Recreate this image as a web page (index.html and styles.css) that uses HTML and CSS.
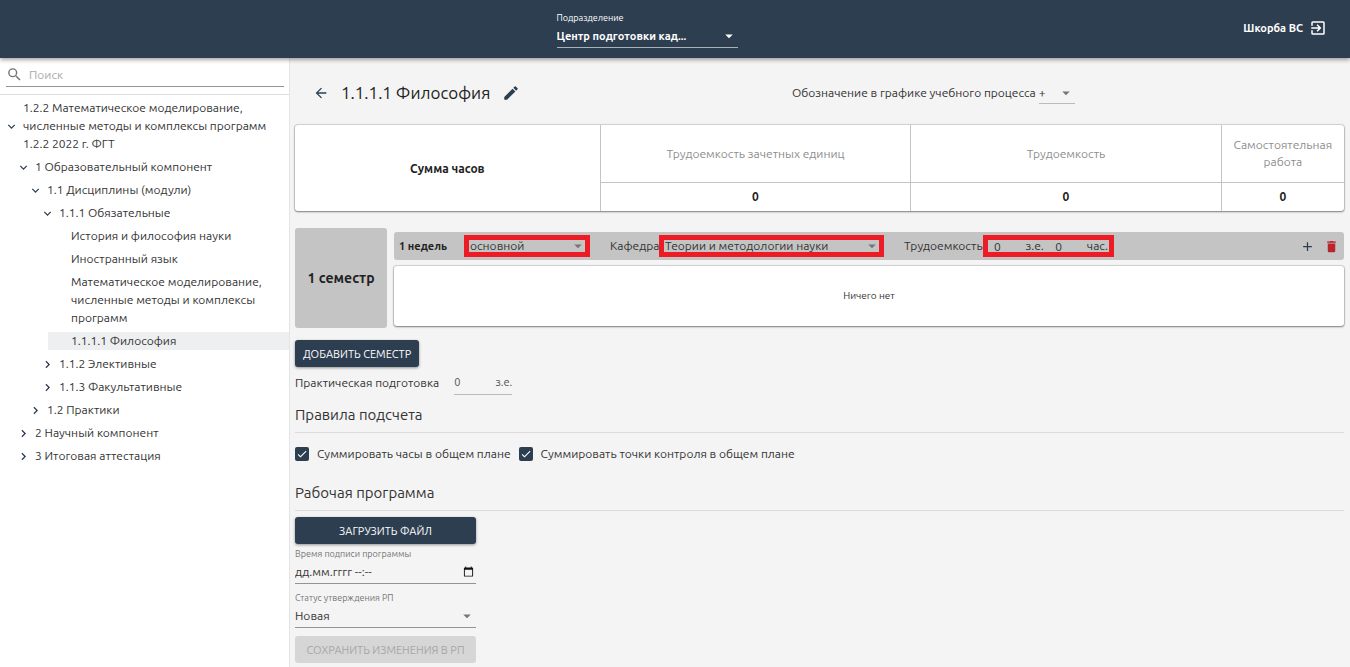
FILE: index.html
```html
<!DOCTYPE html>
<html lang="ru">
<head>
<meta charset="utf-8">
<meta name="viewport" content="width=device-width, initial-scale=1">
<title>1.1.1.1 Философия</title>
<link rel="stylesheet" href="styles.css">
</head>
<body>
<svg class="sprite" aria-hidden="true">
  <symbol id="down" viewBox="0 0 24 24"><path d="M7 10l5 5 5-5z"/></symbol>
  <symbol id="chevron" viewBox="0 0 24 24"><path d="M6 7.500 12 13.500l6-6 2 2-8 8-8-8z"/></symbol>
  <symbol id="check" viewBox="0 0 24 24"><path d="M9 16.2 4.8 12l-1.4 1.4L9 19 21 7l-1.4-1.4z"/></symbol>
</svg>

<header class="topbar">
  <div class="division">
    <label class="division-label" for="division">Подразделение</label>
    <span class="select">
      <select id="division"><option>Центр подготовки кад...</option></select>
      <svg class="caret"><use href="#down"/></svg>
    </span>
  </div>
  <button class="user" type="button">Шкорба ВС
    <svg viewBox="0 0 24 24"><path d="M10.09 15.59 11.5 17l5-5-5-5-1.41 1.41L12.67 11H3v2h9.67zM19 3H5a2 2 0 0 0-2 2v4h2V5h14v14H5v-4H3v4a2 2 0 0 0 2 2h14a2 2 0 0 0 2-2V5a2 2 0 0 0-2-2z"/></svg>
  </button>
</header>

<div class="layout">
  <nav class="sidebar" aria-label="Учебный план">
    <div class="search-wrap">
      <div class="search">
        <svg viewBox="0 0 24 24"><path d="M15.5 14h-.79l-.28-.27A6.47 6.47 0 0 0 16 9.5 6.5 6.5 0 1 0 9.5 16c1.61 0 3.09-.59 4.23-1.57l.27.28v.79l5 4.99L20.49 19zm-6 0a4.5 4.5 0 1 1 0-9 4.5 4.5 0 0 1 0 9z"/></svg>
        <input type="search" placeholder="Поиск" aria-label="Поиск">
      </div>
    </div>
    <ul class="tree">
      <li>
        <a class="node open" href="#"><svg><use href="#chevron"/></svg><span>1.2.2 Математическое моделирование, численные методы и комплексы программ 1.2.2 2022 г. ФГТ</span></a>
        <ul>
          <li>
            <a class="node open" href="#"><svg><use href="#chevron"/></svg><span>1 Образовательный компонент</span></a>
            <ul>
              <li>
                <a class="node open" href="#"><svg><use href="#chevron"/></svg><span>1.1 Дисциплины (модули)</span></a>
                <ul>
                  <li>
                    <a class="node open" href="#"><svg><use href="#chevron"/></svg><span>1.1.1 Обязательные</span></a>
                    <ul>
                      <li><a class="node leaf" href="#">История и философия науки</a></li>
                      <li><a class="node leaf" href="#">Иностранный язык</a></li>
                      <li><a class="node leaf" href="#">Математическое моделирование, численные методы и комплексы программ</a></li>
                      <li><a class="node leaf current" href="#" aria-current="page">1.1.1.1 Философия</a></li>
                    </ul>
                  </li>
                  <li><a class="node" href="#"><svg><use href="#chevron"/></svg><span>1.1.2 Элективные</span></a></li>
                  <li><a class="node" href="#"><svg><use href="#chevron"/></svg><span>1.1.3 Факультативные</span></a></li>
                </ul>
              </li>
              <li><a class="node" href="#"><svg><use href="#chevron"/></svg><span>1.2 Практики</span></a></li>
            </ul>
          </li>
          <li><a class="node" href="#"><svg><use href="#chevron"/></svg><span>2 Научный компонент</span></a></li>
          <li><a class="node" href="#"><svg><use href="#chevron"/></svg><span>3 Итоговая аттестация</span></a></li>
        </ul>
      </li>
    </ul>
  </nav>

  <main class="content">
    <div class="title-row">
      <div class="title">
        <button class="icon-btn" type="button" aria-label="Назад"><svg viewBox="0 0 24 24"><path d="M20 11H7.83l5.59-5.59L12 4l-8 8 8 8 1.41-1.41L7.83 13H20z"/></svg></button>
        <h1>1.1.1.1 Философия</h1>
        <button class="icon-btn edit" type="button" aria-label="Редактировать"><svg viewBox="0 0 24 24"><path d="M3 17.25V21h3.75L17.81 9.94l-3.75-3.75zM20.71 7.04a1 1 0 0 0 0-1.41l-2.34-2.34a1 1 0 0 0-1.41 0l-1.83 1.83 3.75 3.75z"/></svg></button>
      </div>
      <div class="schedule">
        <label for="mark">Обозначение в графике учебного процесса</label>
        <span class="select">
          <select id="mark"><option>+</option></select>
          <svg class="caret"><use href="#down"/></svg>
        </span>
      </div>
    </div>

    <div class="card totals-card">
      <table class="totals">
        <colgroup><col class="col-sum"><col class="col-wide"><col class="col-wide"><col></colgroup>
        <thead>
          <tr><th class="sum" rowspan="2" scope="row">Сумма часов</th><th scope="col">Трудоемкость зачетных единиц</th><th scope="col">Трудоемкость</th><th scope="col">Самостоятельная работа</th></tr>
          <tr><td>0</td><td>0</td><td>0</td></tr>
        </thead>
      </table>
    </div>

    <section class="semester">
      <h2 class="semester-name">1 семестр</h2>
      <div class="semester-body">
        <div class="period">
          <strong class="weeks">1 недель</strong>
          <span class="select marked kind">
            <select aria-label="Тип"><option>основной</option></select>
            <svg class="caret"><use href="#down"/></svg>
          </span>
          <div class="field">
            <label class="chair-label" for="chair">Кафедра</label>
            <span class="select marked chair">
              <select id="chair"><option>Теории и методологии науки</option></select>
              <svg class="caret"><use href="#down"/></svg>
            </span>
          </div>
          <div class="field">
            <label class="load-label" for="ze">Трудоемкость</label>
            <div class="marked load">
              <input id="ze" type="text" value="0"><span>з.е.</span>
              <input type="text" value="0" aria-label="Часы"><span>час.</span>
            </div>
          </div>
          <div class="actions">
            <button class="icon-btn" type="button" aria-label="Добавить"><svg viewBox="0 0 24 24"><path d="M19 13h-6v6h-2v-6H5v-2h6V5h2v6h6z"/></svg></button>
            <button class="icon-btn danger" type="button" aria-label="Удалить"><svg viewBox="0 0 24 24"><path d="M6 19a2 2 0 0 0 2 2h8a2 2 0 0 0 2-2V7H6zM19 4h-3.500l-1-1h-5l-1 1H5v2h14z"/></svg></button>
          </div>
        </div>
        <div class="card empty">Ничего нет</div>
      </div>
    </section>

    <button class="btn add" type="button">ДОБАВИТЬ СЕМЕСТР</button>

    <div class="practice">
      <label for="practice">Практическая подготовка</label>
      <div class="practice-field"><input id="practice" type="text" value="0"><span>з.е.</span></div>
    </div>

    <h2 class="section-title rules">Правила подсчета</h2>
    <div class="checks">
      <label class="check"><span class="box"><input type="checkbox" checked><svg><use href="#check"/></svg></span>Суммировать часы в общем плане</label>
      <label class="check"><span class="box"><input type="checkbox" checked><svg><use href="#check"/></svg></span>Суммировать точки контроля в общем плане</label>
    </div>

    <h2 class="section-title">Рабочая программа</h2>
    <form class="program">
      <button class="btn" type="button">ЗАГРУЗИТЬ ФАЙЛ</button>
      <div class="control">
        <label for="signed">Время подписи программы</label>
        <div class="date">
          <input id="signed" type="text" placeholder="дд.мм.гггг --:--">
          <button class="icon-btn" type="button" aria-label="Открыть календарь"><svg viewBox="0 0 24 24"><path d="M20 3h-1V1h-2v2H7V1H5v2H4a2 2 0 0 0-2 2v16c0 1.100.9 2 2 2h16a2 2 0 0 0 2-2V5a2 2 0 0 0-2-2zm0 18H4V8h16z"/></svg></button>
        </div>
      </div>
      <div class="control">
        <label for="status">Статус утверждения РП</label>
        <span class="select">
          <select id="status"><option>Новая</option></select>
          <svg class="caret"><use href="#down"/></svg>
        </span>
      </div>
      <button class="btn" type="button" disabled>СОХРАНИТЬ ИЗМЕНЕНИЯ В РП</button>
    </form>
  </main>
</div>
</body>
</html>
```
FILE: styles.css
```css
:root {
  --navy: #2d3e50;
  --gray: #c4c4c4;
  --red: #ed1c24;
  --line: #dcdcdc;
}

* { box-sizing: border-box; }

body {
  margin: 0;
  min-height: 100vh;
  display: flex;
  flex-direction: column;
  background: #f4f4f4;
  color: #333;
  font: 12px/18px Ubuntu, "Noto Sans", sans-serif;
}

button, input, select {
  margin: 0;
  padding: 0;
  border: 0;
  background: none;
  color: inherit;
  font: inherit;
  outline: none;
}

button, select { cursor: pointer; }

h1, h2 { margin: 0; font-weight: 400; }
svg { fill: currentColor; flex: none; }
.sprite { display: none; }

.select { position: relative; display: flex; }
.select select { width: 100%; appearance: none; text-overflow: ellipsis; }
.caret {
  position: absolute;
  top: 50%;
  right: 0;
  width: 18px;
  height: 18px;
  margin-top: -9px;
  color: #757575;
  pointer-events: none;
}

.icon-btn { display: flex; color: var(--navy); }
.icon-btn svg { width: 16px; height: 16px; }
.icon-btn.edit svg { width: 18px; height: 18px; }
.icon-btn.danger { color: #b9252c; }

/* Top bar */
.topbar {
  position: relative;
  z-index: 1;
  display: grid;
  grid-template-columns: 1fr auto 1fr;
  align-items: center;
  height: 58px;
  padding: 0 23px 2px;
  background: var(--navy);
  color: #fff;
  font-weight: 600;
  font-size: 11px;
  box-shadow: 0 2px 4px rgba(0, 0, 0, .35);
}
.division { grid-column: 2; width: 181px; margin-left: -56px; padding-top: 1px; }
.division-label { display: block; font-size: 9px; font-weight: 400; line-height: 16px; }
.division .select { border-bottom: 1px solid #a9b1b9; }
.division select { height: 21px; }
.division option { color: #333; }
.division .caret { color: #fff; }
.user { grid-column: 3; justify-self: end; display: flex; align-items: center; gap: 6px; }
.user svg { width: 18px; height: 18px; }

.layout { flex: 1; display: flex; align-items: stretch; }

/* Sidebar */
.sidebar { flex: none; width: 290px; background: #fff; border-right: 1px solid #e4e4e4; }
.search-wrap { padding: 5px 5px 7px 6px; border-bottom: 1px solid var(--line); }
.search { display: flex; align-items: center; gap: 6px; height: 24px; border-bottom: 1px solid #949494; }
.search svg { width: 17px; height: 17px; color: #757575; }
.search input { width: 100%; }
.search input::placeholder { color: #aaa; opacity: 1; }

.tree { padding-top: 4px; }
.tree, .tree ul { margin: 0; list-style: none; }
.tree { padding-left: 0; }
.tree ul { padding-left: 12px; }
.node { display: flex; align-items: center; margin-bottom: 5px; padding-right: 16px; color: #333; text-decoration: none; }
.node svg { width: 11px; height: 11px; margin: 0 6px; color: var(--navy); transform: rotate(-90deg); }
.node.open svg { transform: none; }
.node.leaf { padding-left: 23px; }
.node.current { background: #eeeff1; }

/* Content */
.content { flex: 1; min-width: 0; padding: 0 6px 4px 5px; }
.title-row { display: grid; grid-template-columns: 497px 1fr; align-items: center; height: 67px; padding-top: 3px; }
.title { display: flex; align-items: center; gap: 12px; padding-left: 18px; }
.title h1 { color: #222; font-size: 17px; line-height: 24px; }
.schedule { display: flex; align-items: center; gap: 3px; }
.schedule .select { width: 36px; border-bottom: 1px solid #bbb; }
.schedule select { height: 21px; }

.card {
  background: #fff;
  border-radius: 3px;
  box-shadow: 0 1px 2px rgba(0, 0, 0, .4), 0 0 1px 1px rgba(0, 0, 0, .14);
}
.totals { width: 100%; table-layout: fixed; border-collapse: collapse; }
.col-sum { width: 29.1%; }
.col-wide { width: 29.6%; }
.totals th, .totals td { padding: 0 8px; border: 1px solid var(--gray); text-align: center; }
.totals tr > * { border-top: 0; }
.totals tr > :last-child { border-right: 0; }
.totals th { height: 57px; color: #8e8e8e; font-weight: 400; line-height: 17px; }
.totals td { height: 29px; border-bottom: 0; color: #222; font-weight: 600; }
.totals .sum { border-left: 0; border-bottom: 0; color: #222; font-weight: 600; }

.semester { display: grid; grid-template-columns: 92px 1fr; gap: 7px; margin-top: 17px; }
.semester-name {
  display: flex;
  align-items: center;
  justify-content: center;
  min-height: 100px;
  border-radius: 3px;
  background: var(--gray);
  color: #222;
  font-size: 14px;
  font-weight: 600;
}
.semester-body { display: flex; flex-direction: column; gap: 6px; padding: 4px 0 2px; }
.period { display: flex; align-items: center; height: 28px; padding: 0 5px; border-radius: 3px; background: var(--gray); }
.weeks { width: 65px; font-size: 11px; font-weight: 600; color: #222; }
.field { display: flex; align-items: center; margin-left: 20px; }
.marked { border: 5px solid var(--red); }
.marked select, .marked input { height: 12px; line-height: 12px; }
.marked select { padding-left: 1px; }
.marked .caret { right: -2px; }
.kind { width: 126px; }
.chair { width: 225px; }
.chair-label { width: 49px; }
.load-label { width: 79px; }
.load { display: flex; justify-content: space-between; align-items: center; width: 131px; padding: 0 1px 0 6px; line-height: 12px; }
.load input { width: 20px; }
.actions { display: flex; gap: 9px; margin-left: auto; }
.actions svg { width: 15px; height: 15px; }
.empty { flex: 1; display: flex; align-items: center; justify-content: center; font-size: 10px; }

.btn {
  height: 27px;
  padding: 0 8px;
  border-radius: 3px;
  background: var(--navy);
  color: #fff;
  font-size: 11px;
  white-space: nowrap;
  box-shadow: 0 1px 3px rgba(0, 0, 0, .4);
}
.btn:disabled { background: #d6d6d6; color: #a6a6a6; box-shadow: none; cursor: default; }
.add { display: block; margin-top: 12px; }

.practice { display: flex; align-items: center; gap: 15px; height: 31px; }
.practice-field { display: flex; align-items: center; width: 58px; height: 24px; border-bottom: 1px solid #bbb; color: #555; font-size: 11px; }
.practice-field input { width: 100%; }

.section-title { padding: 7px 0; border-bottom: 1px solid var(--line); font-size: 15px; line-height: 20px; }
.checks { display: flex; gap: 8px; height: 43px; padding-top: 12px; }
.check { display: flex; align-items: center; gap: 8px; height: 18px; cursor: pointer; }
.box { position: relative; display: flex; width: 14px; height: 14px; color: #fff; }
.box input { appearance: none; width: 14px; height: 14px; border: 2px solid var(--navy); border-radius: 2px; }
.box input:checked { background: var(--navy); }
.box svg { position: absolute; inset: 1px; width: 12px; height: 12px; pointer-events: none; }
.box input:not(:checked) + svg { display: none; }

.program { display: flex; flex-direction: column; width: 181px; padding-top: 6px; }
.control { display: flex; flex-direction: column; margin-bottom: 8px; }
.control label { color: #757575; font-size: 9px; line-height: 12px; }
.program > .btn + .control { padding-top: 4px; }
.date, .control .select { display: flex; align-items: center; height: 24px; border-bottom: 1px solid #949494; }
.date input { flex: 1; min-width: 0; }
.date input::placeholder { color: #333; opacity: 1; }
.date .icon-btn { margin-right: 2px; color: #111; }
.date svg { width: 11px; height: 11px; }
```
